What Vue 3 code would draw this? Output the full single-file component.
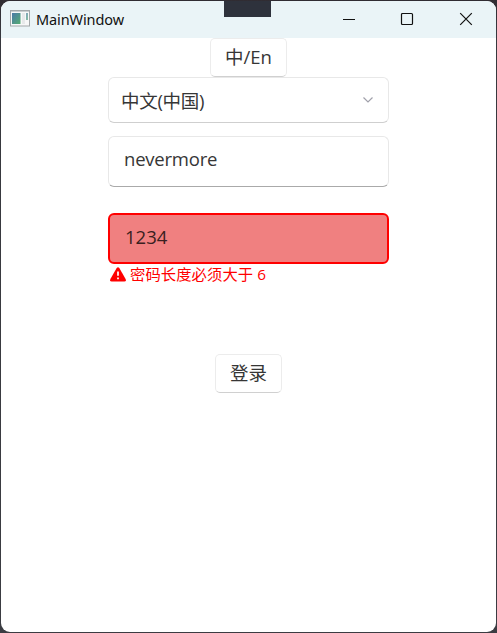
<script setup>
import { ref } from 'vue'

const language = ref('中文(中国)')
const username = ref('nevermore')
const password = ref('1234')
</script>

<template>
  <div class="desktop">
    <main class="window">
      <header class="titlebar">
        <svg class="app-icon" width="20" height="17" viewBox="0 0 20 17">
          <defs>
            <linearGradient id="screen" x1="0" y1="0" x2="1" y2="1">
              <stop offset="0" stop-color="#4c79a8" />
              <stop offset="1" stop-color="#55ad72" />
            </linearGradient>
          </defs>
          <rect x=".5" y=".5" width="19" height="15.500" fill="#f7f8f8" stroke="#a3a8aa" />
          <path d="M1 1.500H19" stroke="#c9cdcf" />
          <rect x="2" y="3" width="8.500" height="11" fill="url(#screen)" />
          <rect x="12" y="3" width="3" height="11" fill="#e7e9ea" />
          <rect x="16" y="3" width="2" height="7" fill="url(#screen)" opacity=".7" />
        </svg>
        <h1 class="title">MainWindow</h1>
        <div class="controls">
          <svg width="14" height="14" viewBox="0 0 14 14"><path d="M1 7.500H13" /></svg>
          <svg width="14" height="14" viewBox="0 0 14 14"><rect x="1.500" y="1.500" width="11" height="11" rx="1" /></svg>
          <svg class="close" width="14" height="14" viewBox="0 0 14 14"><path d="M1.200 1.200L12.800 12.800M12.800 1.200L1.200 12.800" /></svg>
        </div>
        <div class="tool-tab"></div>
      </header>
      <form class="form" @submit.prevent>
        <button class="btn switch" type="button">中/En</button>
        <div class="field combo">
          <span class="combo-text">{{ language }}</span>
          <svg width="12" height="8" viewBox="0 0 12 8"><path d="M1.500 1.500L6 6L10.500 1.500" /></svg>
        </div>
        <input v-model="username" class="field name" type="text" />
        <input v-model="password" class="field invalid" type="text" />
        <div class="error">
          <svg width="16" height="15" viewBox="0 0 16 15">
            <path d="M6.700 1.100Q8 -.8 9.300 1.100L15.600 12Q16.500 14.500 14.300 14.500H1.700Q-.5 14.500 .4 12Z" fill="#f00" />
            <path d="M8 4.500V8.700M8 10.600V12.300" stroke="#fff" stroke-width="1.700" />
          </svg>
          <span>密码长度必须大于 6</span>
        </div>
        <button class="btn login" type="button">登录</button>
      </form>
    </main>
  </div>
</template>

<style>
body {
  margin: 0;
  overflow: hidden;
}
</style>

<style scoped>
* {
  box-sizing: border-box;
}
.desktop {
  width: 497px;
  height: 633px;
  padding: 1px;
  background: linear-gradient(#302c32, #37383e 5%, #3b3c42);
  font-family: "Open Sans", "Noto Sans CJK SC", sans-serif;
}
.window {
  height: 631px;
  overflow: hidden;
  background: #fff;
  border-radius: 9px;
}
.titlebar {
  position: relative;
  display: flex;
  align-items: flex-start;
  height: 37px;
  padding-left: 9px;
  background: #eaf4f7;
}
.app-icon {
  margin-top: 9px;
}
.title {
  margin: 8px 0 0 6px;
  font: 400 14.5px/21px "Noto Sans", sans-serif;
  letter-spacing: -0.1px;
  color: #111;
}
.controls {
  display: flex;
  gap: 44px;
  margin: 11px 23px 0 auto;
}
.controls svg {
  fill: none;
  stroke: #111;
  stroke-width: 1.2;
}
.controls .close {
  margin-left: 1px;
}
.tool-tab {
  position: absolute;
  top: -1px;
  left: 223px;
  width: 47px;
  height: 17px;
  background: #2e323c;
}
.form {
  display: flex;
  flex-direction: column;
  align-items: center;
}
.btn {
  height: 39px;
  padding: 0 0 1px;
  border: 1px solid #ececec;
  border-bottom-color: #d0d0d0;
  border-radius: 5px;
  background: #fff;
  font-family: inherit;
  font-size: 18.5px;
  line-height: 36px;
  color: #363636;
}
.switch {
  width: 77px;
}
.field {
  width: 281px;
  border: 1px solid #e8e8e8;
  border-radius: 6px;
  background: #fff;
  font-family: inherit;
  font-size: 18.5px;
  color: #363636;
  outline: none;
}
.combo {
  display: flex;
  align-items: center;
  justify-content: space-between;
  height: 46px;
  padding: 0 14px 0 12px;
  border-bottom-color: #cfcfcf;
}
.combo-text {
  padding-bottom: 1px;
  letter-spacing: -0.3px;
}
.combo svg {
  fill: none;
  stroke: #a0a0aa;
  stroke-width: 1.2;
}
.name {
  height: 51px;
  margin-top: 13px;
  padding: 0 15px 6px;
  border-bottom-color: #aaa;
  letter-spacing: -0.22px;
}
.invalid {
  height: 51px;
  margin-top: 26px;
  padding: 0 15px 4px;
  border: 2px solid #f00;
  background: #f08080;
  color: #3a2020;
}
.error {
  display: flex;
  align-items: center;
  gap: 4px;
  width: 277px;
  height: 21px;
  font-size: 15.3px;
  line-height: 21px;
  letter-spacing: 0.1px;
  color: #f00;
}
.login {
  width: 67px;
  margin-top: 69px;
}
</style>
